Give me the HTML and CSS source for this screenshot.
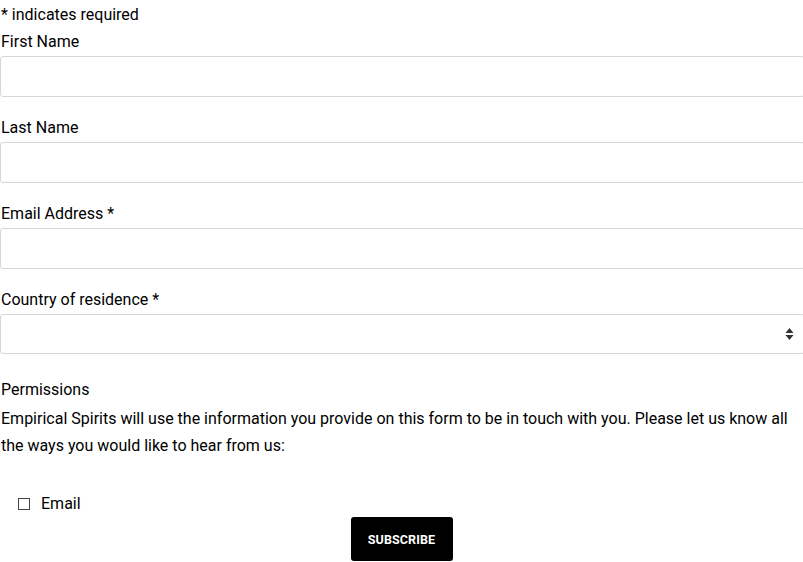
FILE: index.html
```html
<!DOCTYPE html>
<html>
<head>
<meta charset="utf-8">
<link rel="stylesheet" href="styles.css">
</head>
<body>
<form class="form">
  <div class="required-note">* indicates required</div>
  <div class="field">
    <label class="label">First Name</label>
    <input class="input" type="text">
  </div>
  <div class="field">
    <label class="label">Last Name</label>
    <input class="input" type="text">
  </div>
  <div class="field">
    <label class="label">Email Address *</label>
    <input class="input" type="text">
  </div>
  <div class="field field-select">
    <label class="label">Country of residence *</label>
    <div class="select-wrap">
      <div class="select"></div>
      <svg class="select-arrows" width="9" height="14" viewBox="0 0 9 14"><path d="M4.5 1 L8.5 6 H0.5 Z M4.5 13 L8.5 8 H0.5 Z" fill="#333"/></svg>
    </div>
  </div>
  <div class="permissions">
    <div class="perm-title">Permissions</div>
    <p class="perm-text">Empirical Spirits will use the information you provide on this form to be in touch with you. Please let us know all the ways you would like to hear from us:</p>
  </div>
  <div class="check-row">
    <span class="checkbox"></span>
    <span class="check-label">Email</span>
  </div>
  <div class="btn-row">
    <button class="btn" type="button">SUBSCRIBE</button>
  </div>
</form>
</body>
</html>
```

FILE: styles.css
```css
html, body {
  margin: 0;
  padding: 0;
  background: #fff;
}
body {
  font-family: Roboto, "Liberation Sans", sans-serif;
  font-size: 16px;
  line-height: 27px;
  color: #000;
  overflow: hidden;
}
.form {
  width: 805px;
  padding-left: 1px;
  padding-top: 1px;
}
.required-note {
  height: 27px;
}
.field {
  display: flex;
  flex-direction: column;
  margin-bottom: 17px;
}
.label {
  height: 27px;
}
.input, .select {
  margin: 1px 0 0 -1px;
  box-sizing: border-box;
  height: 41px;
  width: 805px;
  border: 1px solid #d6d6d6;
  border-radius: 3px;
  background: #fff;
  padding: 0;
  outline: none;
}
.field-select {
  margin-bottom: 22px;
}
.select-wrap {
  position: relative;
}
.select-wrap .select {
  height: 40px;
}
.select-arrows {
  position: absolute;
  left: 784px;
  top: 14px;
}
.perm-title {
  height: 27px;
}
.perm-text {
  margin: 2px 0 0;
  width: 795px;
}
.check-row {
  display: flex;
  align-items: center;
  margin-top: 31px;
  padding-left: 17px;
  height: 27px;
}
.checkbox {
  box-sizing: border-box;
  width: 12px;
  height: 12px;
  border: 1px solid #444;
  margin-right: 11px;
}
.btn-row {
  display: flex;
  justify-content: center;
  width: 803px;
  margin-left: -1px;
  margin-top: 0;
}
.btn {
  width: 102px;
  height: 44px;
  background: #000;
  color: #fff;
  border: 0;
  border-radius: 3px;
  font-family: Roboto, "Liberation Sans", sans-serif;
  font-weight: 700;
  font-size: 12.5px;
  letter-spacing: 0.1px;
  padding: 0;
}
```
